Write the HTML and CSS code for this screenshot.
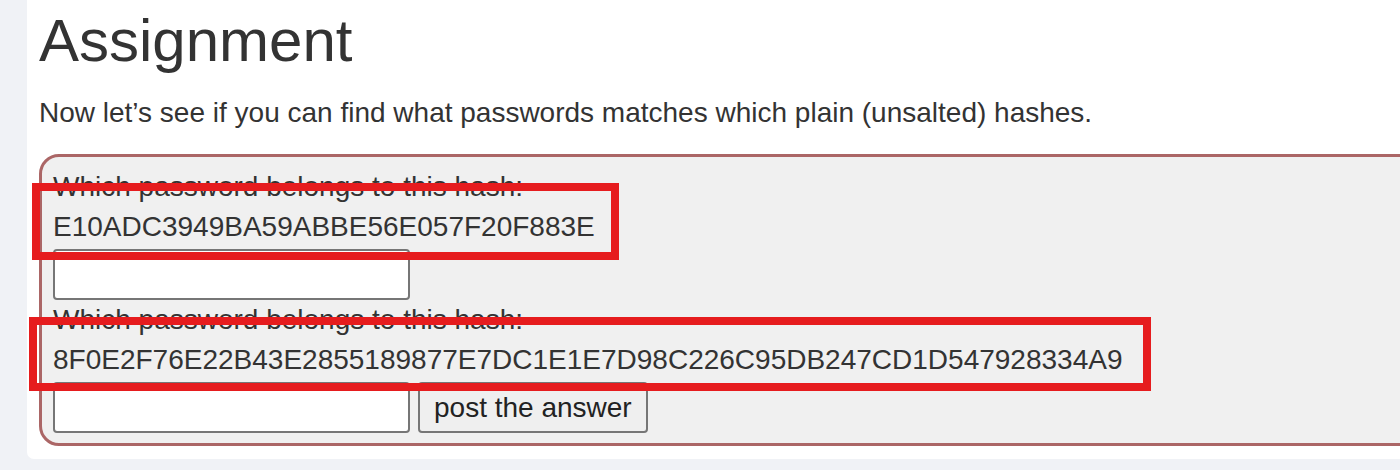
FILE: index.html
```html
<!DOCTYPE html>
<html>
<head>
<meta charset="utf-8">
<link rel="stylesheet" href="styles.css">
</head>
<body>
<div class="page">
  <div class="card">
    <h1 class="title">Assignment</h1>
    <p class="intro">Now let’s see if you can find what passwords matches which plain (unsalted) hashes.</p>
    <form class="box">
      <div class="line">Which password belongs to this hash:</div>
      <div class="line">E10ADC3949BA59ABBE56E057F20F883E</div>
      <div class="row">
        <input class="field" type="text">
      </div>
      <div class="line">Which password belongs to this hash:</div>
      <div class="line">8F0E2F76E22B43E2855189877E7DC1E1E7D98C226C95DB247CD1D547928334A9</div>
      <div class="row">
        <input class="field" type="text">
        <button class="btn" type="button">post the answer</button>
      </div>
    </form>
  </div>
  <div class="mark mark-one"></div>
  <div class="mark mark-two"></div>
</div>
</body>
</html>
```
FILE: styles.css
```css
html, body {
  margin: 0;
  padding: 0;
  background: #f0f2f6;
}
.page {
  position: relative;
  width: 1400px;
  height: 470px;
  overflow: hidden;
  font-family: "Liberation Sans", Arial, sans-serif;
  color: #333;
}
.card {
  margin-left: 27px;
  width: 1500px;
  background: #fff;
  padding: 8px 0 13px 12px;
  border-bottom-left-radius: 7px;
}
.title {
  margin: 0;
  font-size: 60px;
  font-weight: 400;
  line-height: 66px;
}
.intro {
  margin: 19px 0 21px;
  font-size: 28px;
  line-height: 40px;
}
.box {
  margin: 0;
  background: #f0f0f0;
  border: 3px solid #ab6666;
  border-radius: 20px;
  padding: 10px 11px 10px 11px;
  font-size: 28px;
  line-height: 40px;
}
.line {
  white-space: nowrap;
}
.row {
  display: flex;
  gap: 8px;
  margin-top: 2px;
}
.field {
  box-sizing: border-box;
  width: 357px;
  height: 51px;
  margin: 0;
  border: 2px solid #767676;
  border-radius: 4px;
  background: #fff;
  font: 28px "Liberation Sans", Arial, sans-serif;
}
.btn {
  box-sizing: border-box;
  height: 51px;
  margin: 0;
  padding: 0 14px;
  border: 2px solid #767676;
  border-radius: 4px;
  background: #efefef;
  color: #222;
  font: 28px "Liberation Sans", Arial, sans-serif;
}
.mark {
  position: absolute;
  box-sizing: border-box;
  border: 8px solid #e61c1e;
}
.mark-one {
  left: 32px;
  top: 183px;
  width: 587px;
  height: 77px;
}
.mark-two {
  left: 29px;
  top: 317px;
  width: 1122px;
  height: 74px;
}
```
